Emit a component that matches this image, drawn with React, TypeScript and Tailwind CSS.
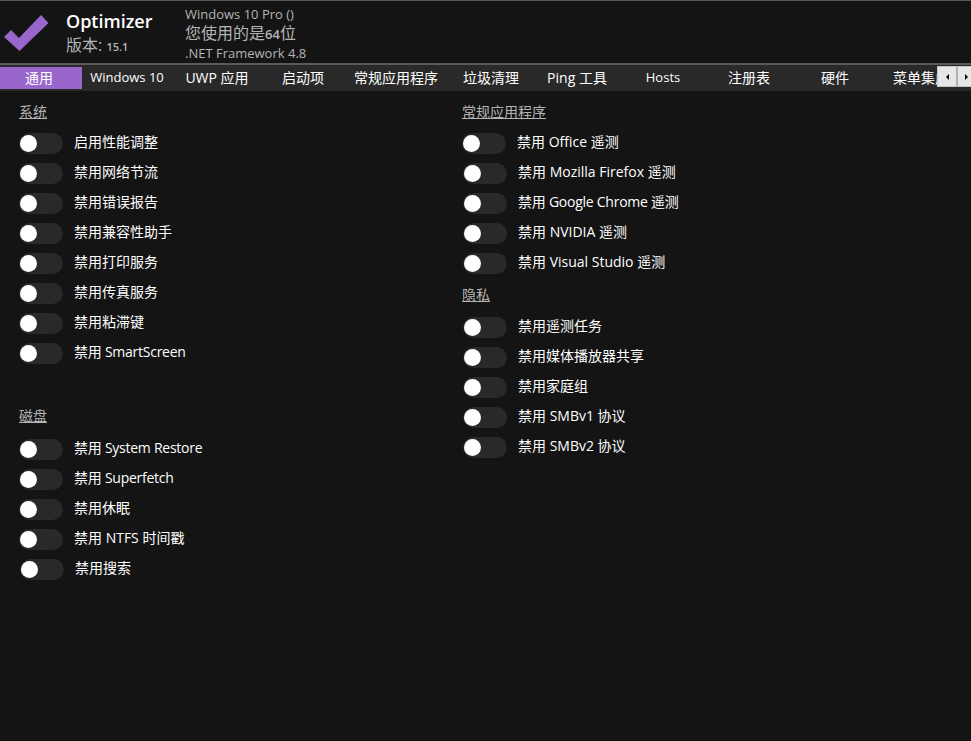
import React from "react";

const FONT = "font-['Open_Sans','Noto_Sans_CJK_SC',sans-serif]";

/* DATA */
const tabs = [
  { label: "通用", style: "w-[82px] pr-[4px] pb-[2px] bg-[#9966cc] text-[14px]" },
  { label: "Windows 10", style: "w-[90px] text-[13px] font-medium" },
  { label: "UWP 应用", style: "w-[90px] pb-[2px] text-[14px]" },
  { label: "启动项", style: "w-[82px] pb-[2px] text-[14px]" },
  { label: "常规应用程序", style: "w-[104px] pb-[2px] text-[14px]" },
  { label: "垃圾清理", style: "w-[86px] pb-[2px] text-[14px]" },
  { label: "Ping 工具", style: "w-[86px] pb-[2px] text-[14px]" },
  { label: "Hosts", style: "w-[86px] text-[13px] font-medium" },
  { label: "注册表", style: "w-[86px] pb-[2px] text-[14px]" },
  { label: "硬件", style: "w-[86px] pb-[2px] text-[14px]" },
  { label: "菜单集成", style: "w-[86px] pb-[2px] text-[14px]" },
];
const system = [
  "启用性能调整",
  "禁用网络节流",
  "禁用错误报告",
  "禁用兼容性助手",
  "禁用打印服务",
  "禁用传真服务",
  "禁用粘滞键",
  "禁用 SmartScreen",
];
const disk = [
  "禁用 System Restore",
  "禁用 Superfetch",
  "禁用休眠",
  "禁用 NTFS 时间戳",
  "禁用搜索",
];
const apps = [
  "禁用 Office 遥测",
  "禁用 Mozilla Firefox 遥测",
  "禁用 Google Chrome 遥测",
  "禁用 NVIDIA 遥测",
  "禁用 Visual Studio 遥测",
];
const privacy = [
  "禁用遥测任务",
  "禁用媒体播放器共享",
  "禁用家庭组",
  "禁用 SMBv1 协议",
  "禁用 SMBv2 协议",
];
const tight = [
  "禁用 SmartScreen",
  "禁用 System Restore",
  "禁用 Superfetch",
  "禁用 Google Chrome 遥测",
];

/* COMPONENTS */
function ToggleRow({ label, nudge }: { label: string; nudge: boolean }) {
  return (
    <div className={`flex h-[30px] items-center ${nudge ? "pl-[1px]" : ""}`}>
      <div className="flex h-[21px] w-11 items-center rounded-full bg-[#292929] pl-[1px]">
        <div className="h-[17px] w-[17px] rounded-full bg-white" />
      </div>
      <span
        className={`mb-[2px] ml-[11px] text-[14px] leading-none text-white ${
          tight.includes(label) ? "tracking-[-0.25px]" : ""
        }`}
      >
        {label}
      </span>
    </div>
  );
}

function Section({
  title,
  items,
  gap,
  nudged,
}: {
  title: string;
  items: string[];
  gap: string;
  nudged: string[];
}) {
  return (
    <div>
      <div className="h-[16px] text-[14px] leading-[16px] text-[#b4b4b4] underline">
        {title}
      </div>
      <div className={gap}>
        {items.map((item) => (
          <ToggleRow key={item} label={item} nudge={nudged.includes(item)} />
        ))}
      </div>
    </div>
  );
}

export default function App() {
  return (
    <div className={`${FONT} h-[741px] w-[971px] overflow-hidden bg-[#141414]`}>
      {/* Header */}
      <div className="flex h-[65px] border-y-2 border-t-[1px] border-[#5a5a5a]">
        <svg className="ml-[4px] mt-[14px] h-[37px] w-[45px]" viewBox="0 0 45 37">
          <path d="M0 22 L7 15 L15 23 L37 0 L44.5 8 L15.5 36 Z" fill="#9966cc" />
        </svg>
        <div className="ml-[17px] mt-[8px] w-[119px]">
          <div className="text-[18px] font-semibold leading-[24px] text-white">
            Optimizer
          </div>
          <div className="mt-[1px] text-[16px] leading-[22px] text-[#b4b4b4]">
            版本: <span className="text-[11px] font-semibold">15.1</span>
          </div>
        </div>
        <div className="mt-[5px] text-[#b4b4b4]">
          <div className="text-[13px] leading-[16px]">Windows 10 Pro ()</div>
          <div className="mt-[1px] text-[16px] leading-[20px]">
            您使用的是<span className="text-[13px] font-semibold">64</span>位
          </div>
          <div className="mt-[1px] text-[13px] leading-[17px]">
            .NET Framework 4.8
          </div>
        </div>
      </div>

      {/* Tabs */}
      <div className="relative flex h-[26px] items-center overflow-hidden bg-[#292929]">
        {tabs.map((tab) => (
          <div
            key={tab.label}
            className={`flex h-[22px] shrink-0 items-center justify-center text-white ${tab.style}`}
          >
            {tab.label}
          </div>
        ))}
        <div className="absolute right-0 top-[1px] flex h-[21px] w-[34px] overflow-hidden border border-r-0 border-[#c4c4c4] bg-[#e6e6e6]">
          <div className="flex w-[20px] shrink-0 items-center justify-center border-r-2 border-[#b0b0b0]">
            <div className="h-0 w-0 border-y-[3px] border-r-[3px] border-y-transparent border-r-black" />
          </div>
          <div className="flex w-[16px] shrink-0 items-center justify-center">
            <div className="h-0 w-0 border-y-[3px] border-l-[3px] border-y-transparent border-l-black" />
          </div>
        </div>
      </div>

      {/* Content */}
      <div className="flex pl-[19px] pt-[13px]">
        <div className="w-[443px]">
          <Section title="系统" items={system} gap="mt-[8px]" nudged={[]} />
          <div className="mt-[40px]">
            <Section title="磁盘" items={disk} gap="mt-[10px]" nudged={["禁用搜索"]} />
          </div>
        </div>
        <div>
          <Section
            title="常规应用程序"
            items={apps}
            gap="mt-[8px]"
            nudged={apps.slice(1)}
          />
          <div className="mt-[9px]">
            <Section title="隐私" items={privacy} gap="mt-[9px]" nudged={privacy} />
          </div>
        </div>
      </div>
    </div>
  );
}
